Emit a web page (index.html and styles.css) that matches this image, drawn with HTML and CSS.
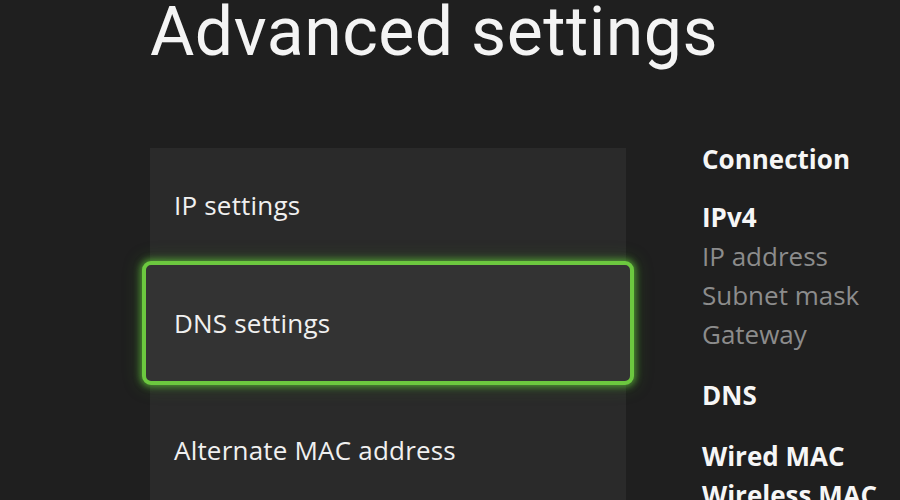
FILE: index.html
```html
<!DOCTYPE html>
<html lang="en">
<head>
<meta charset="utf-8">
<title>Advanced settings</title>
<link rel="stylesheet" href="styles.css">
</head>
<body>
<div class="page">
  <h1 class="title">Advanced settings</h1>
  <div class="main">
    <div class="list">
      <div class="item item-first">IP settings</div>
      <div class="item item-focus">DNS settings</div>
      <div class="item item-last">Alternate MAC address</div>
    </div>
    <div class="info">
      <div class="group group-first">
        <div class="label">Connection</div>
      </div>
      <div class="group">
        <div class="label">IPv4</div>
        <div class="value">IP address</div>
        <div class="value">Subnet mask</div>
        <div class="value">Gateway</div>
      </div>
      <div class="group">
        <div class="label">DNS</div>
      </div>
      <div class="group">
        <div class="label">Wired MAC</div>
        <div class="label">Wireless MAC</div>
      </div>
    </div>
  </div>
</div>
</body>
</html>
```
FILE: styles.css
```css
html, body {
  margin: 0;
  padding: 0;
  height: 100%;
  overflow: hidden;
  background: #1f1f1f;
}
.page {
  padding-left: 150px;
  font-family: "Open Sans", "Noto Sans", sans-serif;
  color: #f2f2f2;
}
.title {
  margin: 0;
  height: 148px;
  font-family: Roboto, "Liberation Sans", sans-serif;
  font-weight: 400;
  font-size: 68px;
  line-height: 64px;
  color: #f4f4f4;
  letter-spacing: 0.5px;
  white-space: nowrap;
}
.main {
  display: flex;
  gap: 76px;
}
.list {
  width: 476px;
  height: 400px;
  flex-shrink: 0;
  background: #2a2a2a;
  display: flex;
  flex-direction: column;
}
.item {
  flex-shrink: 0;
  display: flex;
  align-items: center;
  padding-left: 24px;
  font-size: 26px;
  letter-spacing: 0.2px;
  color: #f0f0f0;
}
.item-first {
  height: 113px;
}
.item-focus {
  height: 116px;
  margin: 0 -8px;
  padding-left: 28px;
  background: #333333;
  border: 4px solid #6cc83f;
  border-radius: 9px;
  box-shadow: 0 0 6px 2px rgba(100, 200, 60, 0.6), 0 0 16px 4px rgba(60, 140, 30, 0.25);
}
.item-last {
  height: 130px;
}
.info {
  display: flex;
  flex-direction: column;
  gap: 22px;
  margin-top: -8px;
  font-size: 26px;
  line-height: 39px;
  white-space: nowrap;
}
.group-first {
  margin-bottom: -3px;
}
.label {
  font-weight: 700;
  color: #f6f6f6;
}
.value {
  color: #8c8c8c;
}
```
